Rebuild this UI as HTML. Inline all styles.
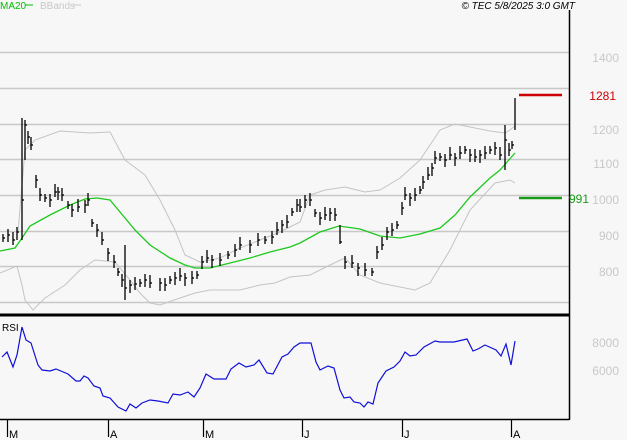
<!DOCTYPE html>
<html><head><meta charset="utf-8"><style>
html,body{margin:0;padding:0;background:#f7f7f7;width:627px;height:440px;overflow:hidden}
svg{display:block}
text{font-family:"Liberation Sans",sans-serif}
</style></head><body>
<svg id="s" width="627" height="440" xmlns="http://www.w3.org/2000/svg">
<rect width="627" height="440" fill="#f7f7f7"/>
<g stroke="#c8c8c8" stroke-width="1.5">
<line x1="0" y1="52.5" x2="569" y2="52.5"/><line x1="0" y1="88.5" x2="569" y2="88.5"/>
<line x1="0" y1="124.5" x2="569" y2="124.5"/><line x1="0" y1="159.5" x2="569" y2="159.5"/>
<line x1="0" y1="195.5" x2="569" y2="195.5"/><line x1="0" y1="231.5" x2="569" y2="231.5"/>
<line x1="0" y1="266.5" x2="569" y2="266.5"/><line x1="0" y1="302.5" x2="569" y2="302.5"/>
</g>
<g id="bands" fill="none" stroke="#c4c4c4" stroke-width="1"></g>
<g id="ma" fill="none" stroke="#1ec81e" stroke-width="1.3"></g>
<g id="bars" stroke="#000" stroke-width="1.3"></g>
<g id="rsi" fill="none" stroke="#1010d8" stroke-width="1.2"></g>
<line x1="0" y1="315" x2="569" y2="315" stroke="#000" stroke-width="3"/>
<line x1="569.5" y1="10" x2="569.5" y2="420" stroke="#000" stroke-width="1.5"/>
<line x1="0" y1="419.5" x2="569" y2="419.5" stroke="#000" stroke-width="1.5"/>
<line x1="519" y1="95" x2="562" y2="95" stroke="#cc0000" stroke-width="2.5"/>
<line x1="519" y1="198" x2="562" y2="198" stroke="#1a9a1a" stroke-width="2.5"/>
<line x1="515" y1="98" x2="515" y2="130" stroke="#000" stroke-width="1.3"/>
<g fill="#c8c8c8" font-size="12" text-anchor="end">
<text x="619" y="62">1400</text><text x="619" y="134">1200</text><text x="619" y="168">1100</text>
<text x="619" y="204">1000</text><text x="619" y="240">900</text><text x="619" y="276">800</text>
<text x="619" y="347">8000</text><text x="619" y="375">6000</text>
</g>
<text x="616" y="100" fill="#cc0000" font-size="12" text-anchor="end">1281</text>
<text x="569" y="203" fill="#1a9a1a" font-size="12">991</text>
<text x="0" y="9" fill="#00c000" font-size="10">MA20</text>
<line x1="25" y1="5" x2="33" y2="5" stroke="#00c000"/>
<text x="40" y="9" fill="#c8c8c8" font-size="10">BBands</text>
<line x1="73" y1="5" x2="81" y2="5" stroke="#c8c8c8"/>
<text x="575" y="9" fill="#000" font-size="10" font-style="italic" text-anchor="end">© TEC 5/8/2025 3:0 GMT</text>
<text x="2" y="331" fill="#000" font-size="10">RSI</text>
<g stroke="#000" stroke-width="1.2">
<line x1="7.5" y1="420" x2="7.5" y2="437"/><line x1="108.5" y1="420" x2="108.5" y2="437"/>
<line x1="203.5" y1="420" x2="203.5" y2="437"/><line x1="302.5" y1="420" x2="302.5" y2="437"/>
<line x1="402.5" y1="420" x2="402.5" y2="437"/><line x1="511.5" y1="420" x2="511.5" y2="437"/>
</g>
<g fill="#000" font-size="11">
<text x="9" y="438">M</text><text x="110" y="438">A</text><text x="205" y="438">M</text>
<text x="304" y="438">J</text><text x="404" y="438">J</text><text x="513" y="438">A</text>
</g>
</svg>
<script>
(function(){
var NS="http://www.w3.org/2000/svg";
function P(a){return a.map(function(p){return p[0]+","+p[1]}).join(" ")}
function pl(g,pts){var e=document.createElementNS(NS,"polyline");e.setAttribute("points",P(pts));document.getElementById(g).appendChild(e);}
function ln(g,x1,y1,x2,y2){var e=document.createElementNS(NS,"line");e.setAttribute("x1",x1);e.setAttribute("y1",y1);e.setAttribute("x2",x2);e.setAttribute("y2",y2);g.appendChild(e);}
pl("bands",[[18,232],[25,150],[35,140],[60,131],[90,133],[110,132],[125,160],[145,175],[160,200],[175,230],[185,255],[200,262],[220,258],[240,248],[260,240],[280,232],[300,222],[310,195],[325,190],[345,187],[365,192],[380,190],[400,178],[420,160],[440,130],[455,124],[470,127],[490,131],[505,133],[510,130],[515,126]]);
pl("bands",[[0,273],[17,266],[22,285],[25,300],[33,310],[45,298],[65,285],[80,270],[95,260],[115,262],[130,280],[140,293],[150,303],[160,305],[180,298],[195,293],[210,290],[240,290],[260,285],[275,283],[290,277],[310,275],[330,265],[345,258],[360,275],[380,283],[400,287],[415,290],[430,283],[450,250],[470,210],[495,183],[510,180],[515,183]]);
pl("ma",[[0,251],[15,248],[22,238],[30,226],[50,215],[70,205],[85,199],[97,198],[110,200],[120,212],[135,230],[150,245],[170,258],[185,265],[195,268],[210,268],[230,263],[250,258],[270,252],[290,247],[300,243],[320,232],[339,226],[360,229],[380,236],[400,238],[420,234],[440,228],[455,215],[470,197],[490,178],[500,170],[515,153]]);
var c=[[3,238],[8,235],[13,240],[17,232],[22,200],[25,125],[28,137],[31,145],[36,180],[40,195],[45,198],[50,200],[55,192],[58,192],[62,195],[68,205],[72,210],[78,207],[85,205],[88,200],[92,223],[97,230],[102,240],[108,253],[114,262],[118,272],[122,280],[125,288],[130,285],[135,284],[140,283],[145,280],[150,283],[160,283],[165,285],[170,280],[175,278],[180,276],[185,278],[192,278],[197,275],[202,262],[207,258],[212,260],[220,260],[228,255],[235,250],[240,245],[250,245],[258,240],[265,240],[272,237],[277,230],[282,225],[287,222],[292,212],[297,205],[300,207],[305,200],[310,200],[315,213],[320,218],[325,215],[330,213],[335,215],[340,242],[345,262],[352,263],[358,268],[365,270],[372,272],[377,252],[382,245],[387,232],[392,230],[397,225],[402,208],[405,195],[410,198],[415,195],[420,190],[423,182],[428,175],[432,168],[435,158],[440,157],[445,160],[450,155],[455,158],[460,153],[465,150],[470,155],[475,157],[480,155],[485,153],[490,150],[495,148],[500,155],[505,140],[509,150],[512,145]];
var g=document.getElementById("bars");
for(var i=0;i<c.length;i++){var x=c[i][0],y=c[i][1],h=4+((i*7)%5),l=4+((i*3)%5);
var hi=y-h,lo=y+l;
if(x==22){hi=118;lo=240;} if(x==25){hi=120;lo=160;} if(x==125){hi=245;lo=300;} if(x==340){hi=225;lo=244;}
if(x==505){hi=125;lo=170;}
ln(g,x,hi,x,lo);ln(g,x,y,x+2,y);}
pl("rsi",[[2,357],[7,352],[13,367],[17,355],[22,327],[26,340],[31,343],[38,365],[42,370],[50,371],[56,369],[68,374],[76,381],[80,381],[84,376],[88,378],[94,386],[100,388],[103,396],[110,398],[118,407],[126,411],[130,404],[136,408],[142,403],[150,400],[158,401],[168,403],[173,394],[180,395],[188,392],[194,397],[200,388],[206,374],[214,379],[226,379],[231,369],[239,363],[246,367],[254,365],[259,360],[267,373],[273,374],[282,357],[288,354],[294,347],[300,343],[311,343],[316,362],[320,370],[328,366],[334,368],[340,390],[344,398],[350,397],[354,402],[360,403],[364,407],[368,402],[373,404],[378,383],[386,371],[394,367],[400,361],[405,352],[410,356],[416,355],[424,347],[435,341],[440,342],[454,342],[467,339],[473,351],[478,349],[485,345],[496,350],[501,356],[506,344],[511,365],[515,341]]);
})();
</script>
</body></html>
